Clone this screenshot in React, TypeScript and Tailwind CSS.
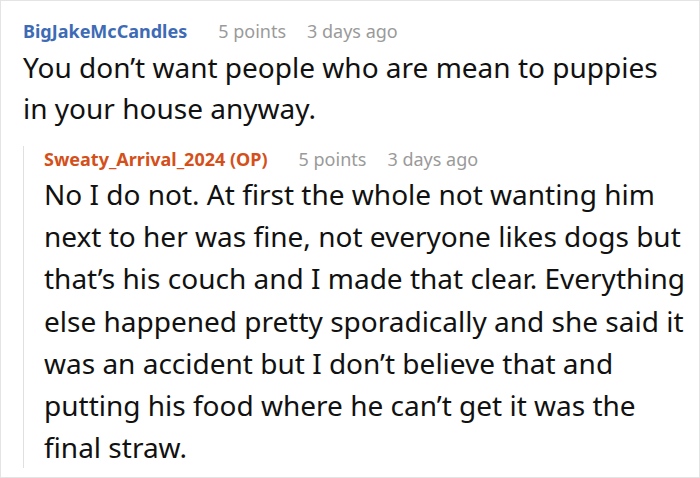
import React from "react";

const font = { fontFamily: "'Noto Sans', 'Open Sans', sans-serif" };

export default function App() {
    return (
        <div
            className="w-[700px] h-[478px] bg-white border border-[#e4e4e4] pl-[22px] pr-[13px] overflow-hidden"
            style={font}
        >
            {/* top-level comment */}
            <div className="pt-[17px]">
                <div className="flex items-baseline text-[18px] leading-[26px]">
                    <span className="font-bold text-[#3e6bb5]">BigJakeMcCandles</span>
                    <span className="ml-[31px] text-[#9a9a9a]">5 points</span>
                    <span className="ml-[21px] text-[#9a9a9a]">3 days ago</span>
                </div>
                <p className="mt-[3px] text-[28px] leading-[41px] text-[#111]">
                    You don’t want people who are mean to puppies in your house anyway.
                </p>
            </div>

            {/* reply */}
            <div className="mt-[29px] border-l border-[#e0e0e0] pl-[20px]">
                <div className="-mt-[12px] flex items-baseline text-[18px] leading-[26px]">
                    <span className="font-bold text-[#d4501b]">Sweaty_Arrival_2024 (OP)</span>
                    <span className="ml-[31px] text-[#9a9a9a]">5 points</span>
                    <span className="ml-[21px] text-[#9a9a9a]">3 days ago</span>
                </div>
                <p className="mt-[1px] -mb-[8px] text-[28px] leading-[42.2px] text-[#111]">
                    No I do not. At first the whole not wanting him next to her was fine, not everyone likes dogs but that’s his couch and I made that clear. Everything else happened pretty sporadically and she said it was an accident but I don’t believe that and putting his food where he can’t get it was the final straw.
                </p>
            </div>
        </div>
    );
}
